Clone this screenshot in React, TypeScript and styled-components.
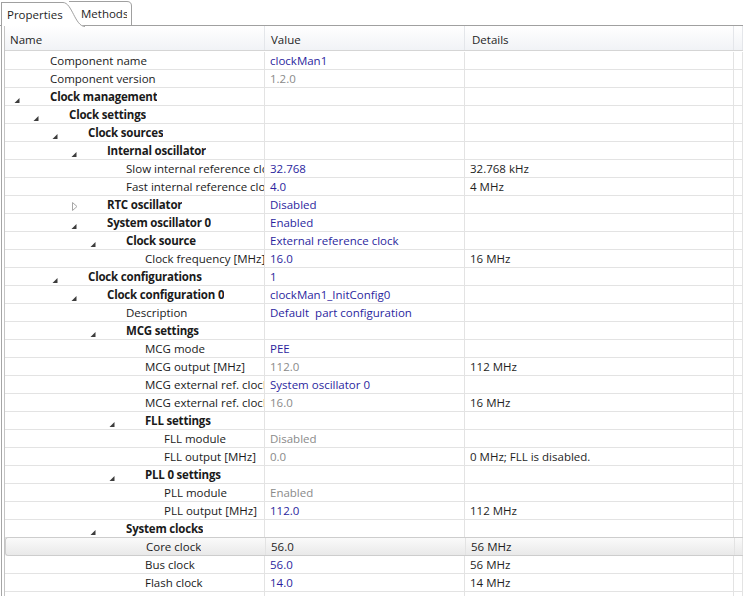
import React from 'react';
import styled, { createGlobalStyle } from 'styled-components';

const GlobalStyle = createGlobalStyle`
  html, body {
    margin: 0;
    padding: 0;
    background: #fff;
  }
  body {
    font-family: "Open Sans", "Noto Sans", sans-serif;
    font-size: 11.5px;
    color: #1e1e1e;
    overflow: hidden;
  }
`;

const View = styled.div`
  width: 743px;
  height: 596px;
  overflow: hidden;
  background: #fff;
  display: flex;
  flex-direction: column;
`;

const TabStrip = styled.div`
  display: flex;
  align-items: flex-end;
  height: 26px;
  box-sizing: border-box;
  padding-left: 1px;
  border-bottom: 1px solid #a0a0a0;
  flex-shrink: 0;
`;

const Tab = styled.div<{ $active?: boolean }>`
  position: relative;
  display: flex;
  height: 24px;
  margin-bottom: ${(p) => (p.$active ? '-1px' : '0')};
  margin-left: ${(p) => (p.$active ? '0' : '-16px')};
  z-index: ${(p) => (p.$active ? 2 : 1)};
`;

const TabLabel = styled.div<{ $active?: boolean; $width: number }>`
  display: flex;
  align-items: center;
  box-sizing: border-box;
  width: ${(p) => p.$width}px;
  background: #fff;
  border-top: 1px solid #a0a0a0;
  border-left: ${(p) => (p.$active ? '1px solid #a0a0a0' : 'none')};
  padding: 0 0 1px ${(p) => (p.$active ? 5 : 12)}px;
  white-space: nowrap;
`;

const TabCurve = styled.svg`
  display: block;
  flex-shrink: 0;
`;

const Frame = styled.div`
  flex: 1;
  margin-left: 1px;
  border-left: 1px solid #a6a6a6;
  padding-left: 2px;
  display: flex;
  min-height: 0;
`;

const Tree = styled.div`
  flex: 1;
  border-left: 1px solid #c4c4c4;
  display: flex;
  flex-direction: column;
  min-width: 0;
`;

const HeaderRow = styled.div`
  display: flex;
  height: 25px;
  box-sizing: border-box;
  border-bottom: 1px solid #d5d5d5;
  background: linear-gradient(#ffffff, #f1f3f6);
  flex-shrink: 0;
`;

const HeaderCell = styled.div<{ $width?: number; $pad: number }>`
  ${(p) => (p.$width ? `width: ${p.$width}px;` : 'flex: 1;')}
  box-sizing: border-box;
  flex-shrink: 0;
  display: flex;
  align-items: center;
  padding: 3px 0 0 ${(p) => p.$pad}px;
  border-right: 1px solid #e4e6ea;
`;

const Body = styled.div`
  display: flex;
  flex-direction: column;
  padding-top: 1px;
`;

const Row = styled.div<{ $selected?: boolean }>`
  display: flex;
  height: 18px;
  box-sizing: border-box;
  border-bottom: 1px solid #e3e3e3;
  flex-shrink: 0;
  ${(p) =>
    p.$selected &&
    `
    background: linear-gradient(#fafafa, #e9e9e9);
    border: 1px solid #cdcdcd;
    border-right: none;
    border-radius: 3px 0 0 3px;
    margin-top: -1px;
    height: 19px;
  `}
`;

const Cell = styled.div<{ $width?: number }>`
  ${(p) => (p.$width ? `width: ${p.$width}px;` : 'flex: 1;')}
  flex-shrink: 0;
  box-sizing: border-box;
  display: flex;
  align-items: center;
  padding-left: 5px;
  border-right: 1px solid #e3e3e3;
  white-space: nowrap;
  overflow: hidden;
`;

const NameCell = styled.div<{ $level: number }>`
  width: 260px;
  flex-shrink: 0;
  box-sizing: border-box;
  display: flex;
  align-items: center;
  padding-left: ${(p) => p.$level * 19}px;
  border-right: 1px solid #e3e3e3;
  white-space: nowrap;
  overflow: hidden;
`;

const Toggle = styled.span`
  width: 45px;
  height: 17px;
  flex-shrink: 0;
  position: relative;
`;

const ToggleIcon = styled.svg<{ $top: number; $left: number }>`
  position: absolute;
  top: ${(p) => p.$top}px;
  left: ${(p) => p.$left}px;
`;

const NameText = styled.span<{ $bold?: boolean }>`
  font-weight: ${(p) => (p.$bold ? 700 : 400)};
  letter-spacing: ${(p) => (p.$bold ? '-0.2px' : '0')};
  color: #1a1a1a;
  min-width: 0;
  overflow: hidden;
`;

const tones = {
  blue: '#2b1f9e',
  gray: '#8a8a8a',
  plain: '#1e1e1e',
};

const ValueText = styled.span<{ $tone: keyof typeof tones }>`
  color: ${(p) => tones[p.$tone]};
`;

type RowData = {
  level: number;
  name: string;
  node?: 'open' | 'closed';
  value?: string;
  tone?: keyof typeof tones;
  details?: string;
  selected?: boolean;
};

const rows: RowData[] = [
  { level: 0, name: 'Component name', value: 'clockMan1', tone: 'blue' },
  { level: 0, name: 'Component version', value: '1.2.0', tone: 'gray' },
  { level: 0, name: 'Clock management', node: 'open' },
  { level: 1, name: 'Clock settings', node: 'open' },
  { level: 2, name: 'Clock sources', node: 'open' },
  { level: 3, name: 'Internal oscillator', node: 'open' },
  { level: 4, name: 'Slow internal reference clock [kHz]', value: '32.768', tone: 'blue', details: '32.768 kHz' },
  { level: 4, name: 'Fast internal reference clock [MHz]', value: '4.0', tone: 'blue', details: '4 MHz' },
  { level: 3, name: 'RTC oscillator', node: 'closed', value: 'Disabled', tone: 'blue' },
  { level: 3, name: 'System oscillator 0', node: 'open', value: 'Enabled', tone: 'blue' },
  { level: 4, name: 'Clock source', node: 'open', value: 'External reference clock', tone: 'blue' },
  { level: 5, name: 'Clock frequency [MHz]', value: '16.0', tone: 'blue', details: '16 MHz' },
  { level: 2, name: 'Clock configurations', node: 'open', value: '1', tone: 'blue' },
  { level: 3, name: 'Clock configuration 0', node: 'open', value: 'clockMan1_InitConfig0', tone: 'blue' },
  { level: 4, name: 'Description', value: 'Default\u00a0 part configuration', tone: 'blue' },
  { level: 4, name: 'MCG settings', node: 'open' },
  { level: 5, name: 'MCG mode', value: 'PEE', tone: 'blue' },
  { level: 5, name: 'MCG output [MHz]', value: '112.0', tone: 'gray', details: '112 MHz' },
  { level: 5, name: 'MCG external ref. clock source', value: 'System oscillator 0', tone: 'blue' },
  { level: 5, name: 'MCG external ref. clock [MHz]', value: '16.0', tone: 'gray', details: '16 MHz' },
  { level: 5, name: 'FLL settings', node: 'open' },
  { level: 6, name: 'FLL module', value: 'Disabled', tone: 'gray' },
  { level: 6, name: 'FLL output [MHz]', value: '0.0', tone: 'gray', details: '0 MHz; FLL is disabled.' },
  { level: 5, name: 'PLL 0 settings', node: 'open' },
  { level: 6, name: 'PLL module', value: 'Enabled', tone: 'gray' },
  { level: 6, name: 'PLL output [MHz]', value: '112.0', tone: 'blue', details: '112 MHz' },
  { level: 4, name: 'System clocks', node: 'open' },
  { level: 5, name: 'Core clock', value: '56.0', tone: 'plain', details: '56 MHz', selected: true },
  { level: 5, name: 'Bus clock', value: '56.0', tone: 'blue', details: '56 MHz' },
  { level: 5, name: 'Flash clock', value: '14.0', tone: 'blue', details: '14 MHz' },
  { level: 0, name: '' },
];

const ExpandedIcon = () => (
  <ToggleIcon $top={10} $left={9} width="6" height="6" viewBox="0 0 6 6">
    <polygon points="5.5,0 5.5,5 0.5,5" fill="#3c3c3c" />
  </ToggleIcon>
);

const CollapsedIcon = () => (
  <ToggleIcon $top={6} $left={10} width="6" height="9" viewBox="0 0 6 9">
    <polygon points="0.5,0.5 5,4.5 0.5,8.5" fill="#fff" stroke="#a6a6a6" strokeWidth="1" />
  </ToggleIcon>
);

const App = () => {
  return (
    <View>
      <GlobalStyle />
      <TabStrip>
        <Tab $active>
          <TabLabel $active $width={62}>Properties</TabLabel>
          <TabCurve width="22" height="25" viewBox="0 0 22 25">
            <path d="M0 0 C9 0 12 24 22 24 L22 25 L0 25 Z" fill="#fff" />
            <path d="M0 0.5 C9 0.5 12 24.5 22 24.5" fill="none" stroke="#a0a0a0" />
          </TabCurve>
        </Tab>
        <Tab>
          <TabLabel $width={58}>Methods</TabLabel>
          <TabCurve width="5" height="24" viewBox="0 0 5 24">
            <path d="M0 0 Q4.5 0 4.5 4.5 L4.5 24 L0 24 Z" fill="#fff" />
            <path d="M0 0.5 Q4.5 0.5 4.5 5 L4.5 24" fill="none" stroke="#a0a0a0" />
          </TabCurve>
        </Tab>
      </TabStrip>
      <Frame>
        <Tree>
          <HeaderRow>
            <HeaderCell $width={260} $pad={5}>Name</HeaderCell>
            <HeaderCell $width={200} $pad={6}>Value</HeaderCell>
            <HeaderCell $width={269} $pad={7}>Details</HeaderCell>
            <HeaderCell $pad={0} />
          </HeaderRow>
          <Body>
            {rows.map((r, i) => (
              <Row key={i} $selected={r.selected}>
                <NameCell $level={r.level}>
                  <Toggle>
                    {r.node === 'open' && <ExpandedIcon />}
                    {r.node === 'closed' && <CollapsedIcon />}
                  </Toggle>
                  <NameText $bold={!!r.node}>{r.name}</NameText>
                </NameCell>
                <Cell $width={200}>
                  {r.value && <ValueText $tone={r.tone ?? 'plain'}>{r.value}</ValueText>}
                </Cell>
                <Cell $width={269}>{r.details}</Cell>
                <Cell />
              </Row>
            ))}
          </Body>
        </Tree>
      </Frame>
    </View>
  );
};

export default App;
